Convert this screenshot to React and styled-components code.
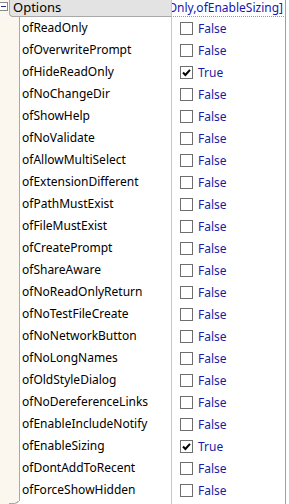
import styled, { createGlobalStyle } from "styled-components";

const GlobalStyle = createGlobalStyle`
  html, body {
    margin: 0;
    padding: 0;
    background: #ffffff;
  }
  body {
    font-family: "Noto Sans", "Liberation Sans", sans-serif;
    font-size: 12px;
  }
`;

const options = [
  ["ofReadOnly", false],
  ["ofOverwritePrompt", false],
  ["ofHideReadOnly", true],
  ["ofNoChangeDir", false],
  ["ofShowHelp", false],
  ["ofNoValidate", false],
  ["ofAllowMultiSelect", false],
  ["ofExtensionDifferent", false],
  ["ofPathMustExist", false],
  ["ofFileMustExist", false],
  ["ofCreatePrompt", false],
  ["ofShareAware", false],
  ["ofNoReadOnlyReturn", false],
  ["ofNoTestFileCreate", false],
  ["ofNoNetworkButton", false],
  ["ofNoLongNames", false],
  ["ofOldStyleDialog", false],
  ["ofNoDereferenceLinks", false],
  ["ofEnableIncludeNotify", false],
  ["ofEnableSizing", true],
  ["ofDontAddToRecent", false],
  ["ofForceShowHidden", false],
];

function App() {
  return (
    <>
      <GlobalStyle />
      <Grid>
        <HeaderRow>
          <Gutter>
            <Toggle>
              <span />
            </Toggle>
          </Gutter>
          <Category>Options</Category>
          <HeaderValue>
            <span>[ofHideReadOnly,ofEnableSizing]</span>
          </HeaderValue>
        </HeaderRow>
        {options.map(([name, on]) => (
          <Row key={name}>
            <Gutter $wide />
            <Name>{name}</Name>
            <Value>
              <Check $on={on}>{on ? <Tick /> : null}</Check>
              <span>{on ? "True" : "False"}</span>
            </Value>
          </Row>
        ))}
        <Tail>
          <Gutter />
          <Corner />
          <Blank />
          <Value />
        </Tail>
      </Grid>
    </>
  );
}

function Tick() {
  return (
    <svg width="11" height="11" viewBox="0 0 11 11">
      <path d="M2 5.5 L4.4 8 L9 2.8" fill="none" stroke="#000" strokeWidth="2" />
    </svg>
  );
}

export default App;

const Grid = styled.div`
  width: 289px;
  height: 504px;
  overflow: hidden;
  display: flex;
  flex-direction: column;
  background: #ffffff;
  color: #000;
`;

const HeaderRow = styled.div`
  display: grid;
  grid-template-columns: 9px 162px 115px 3px;
  height: 17px;
  flex: none;
`;

const Gutter = styled.div`
  background: #fcf7ee;
  position: relative;
  width: ${(p) => (p.$wide ? "19px" : "9px")};
`;

const Toggle = styled.div`
  position: absolute;
  left: -1px;
  top: 2px;
  width: 7px;
  height: 7px;
  border: 1px solid #8a8a8a;
  background: #fff;
  span {
    position: absolute;
    left: 1px;
    top: 3px;
    width: 5px;
    height: 1px;
    background: #2a2a8a;
  }
`;

const Category = styled.div`
  background: #e3e3e3;
  border-left: 1px solid #a8a8a8;
  border-bottom: 1px solid #a8a8a8;
  border-bottom-left-radius: 4px;
  padding-left: 3px;
  line-height: 15px;
  font-size: 13px;
  color: #000;
`;

const HeaderValue = styled.div`
  border-left: 1px solid #c8c8c8;
  border-bottom: 1px dotted #9a9a9a;
  border-right: 1px solid #a0a0a0;
  overflow: hidden;
  display: flex;
  justify-content: flex-end;
  line-height: 15px;
  color: #1515b0;
  font-size: 12px;
  white-space: nowrap;
  padding-right: 2px;
  span {
    flex: none;
  }
`;

const Row = styled.div`
  display: grid;
  grid-template-columns: 19px 152px 115px 3px;
  height: 22px;
  flex: none;
`;

const Name = styled.div`
  border-left: 1px solid #a8a8a8;
  padding-left: 2px;
  line-height: 22px;
  white-space: nowrap;
  overflow: hidden;
`;

const Value = styled.div`
  border-left: 1px solid #c8c8c8;
  border-right: 1px solid #a0a0a0;
  display: flex;
  align-items: center;
  gap: 5px;
  padding-left: 8px;
  color: #1a1aa6;
`;

const Check = styled.span`
  width: 11px;
  height: 11px;
  border: 1px solid #6e6e6e;
  background: #fff;
  display: flex;
  align-items: center;
  justify-content: center;
  flex: none;
`;

const Tail = styled.div`
  display: grid;
  grid-template-columns: 9px 11px 151px 115px 3px;
  height: 20px;
  flex: none;
`;

const Corner = styled.div`
  height: 7px;
  margin-top: -5px;
  background: #fcf7ee;
  border-right: 1px solid #a8a8a8;
  border-bottom: 1px solid #a8a8a8;
  border-bottom-right-radius: 6px;
`;

const Blank = styled.div`
  background: #ffffff;
`;
